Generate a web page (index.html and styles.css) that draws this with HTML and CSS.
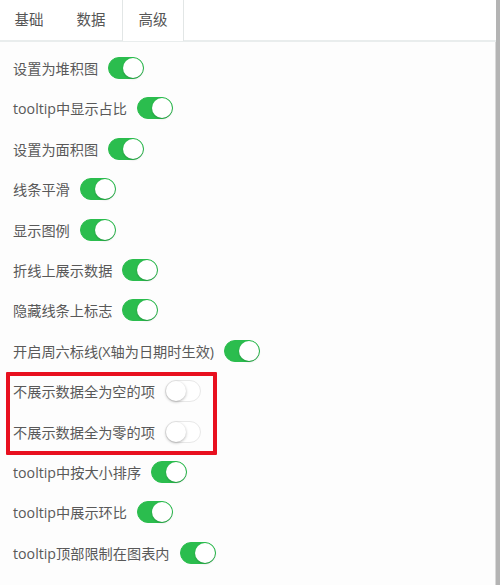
FILE: index.html
```html
<!DOCTYPE html>
<html lang="zh-CN">
<head>
<meta charset="utf-8">
<link rel="stylesheet" href="styles.css">
</head>
<body>
<div class="page">
  <div class="main">
    <div class="tabs">
      <div class="tab">基础</div>
      <div class="tab">数据</div>
      <div class="tab active">高级</div>
    </div>
    <div class="content">
      <div class="row"><span>设置为堆积图</span><span class="sw on"></span></div>
      <div class="row"><span>tooltip中显示占比</span><span class="sw on"></span></div>
      <div class="row"><span>设置为面积图</span><span class="sw on"></span></div>
      <div class="row"><span>线条平滑</span><span class="sw on"></span></div>
      <div class="row"><span>显示图例</span><span class="sw on"></span></div>
      <div class="row"><span>折线上展示数据</span><span class="sw on"></span></div>
      <div class="row"><span>隐藏线条上标志</span><span class="sw on"></span></div>
      <div class="row"><span>开启周六标线(X轴为日期时生效)</span><span class="sw on"></span></div>
      <div class="group">
        <div class="row"><span>不展示数据全为空的项</span><span class="sw"></span></div>
        <div class="row"><span>不展示数据全为零的项</span><span class="sw"></span></div>
      </div>
      <div class="row"><span>tooltip中按大小排序</span><span class="sw on"></span></div>
      <div class="row"><span>tooltip中展示环比</span><span class="sw on"></span></div>
      <div class="row"><span>tooltip顶部限制在图表内</span><span class="sw on"></span></div>
    </div>
  </div>
  <div class="scrollbar"></div>
</div>
</body>
</html>
```
FILE: styles.css
```css
html, body {
  margin: 0;
  padding: 0;
  background: #ffffff;
}
body {
  font-family: "Open Sans", "Noto Sans CJK SC", sans-serif;
  font-size: 14.2px;
  color: #595959;
}
.page {
  display: flex;
  width: 500px;
  height: 585px;
  overflow: hidden;
}
.main {
  flex: 1;
  display: flex;
  flex-direction: column;
  min-width: 0;
}
.tabs {
  display: flex;
  height: 40px;
  border-bottom: 2px solid #e9eded;
  margin-left: -2px;
  flex: none;
}
.tab {
  width: 60px;
  height: 41px;
  line-height: 40px;
  text-align: center;
  border-left: 1px solid transparent;
  border-right: 1px solid transparent;
  color: #555;
  font-size: 14.5px;
}
.tab.active {
  background: #ffffff;
  border-left-color: #e2e6e6;
  border-right-color: #e2e6e6;
  position: relative;
  z-index: 1;
}
.content {
  flex: 1;
  background: #fdfdfd;
  border-right: 1px solid #d9d9d9;
  padding: 15px 0 0 13px;
  display: flex;
  flex-direction: column;
  gap: 18.4px;
}
.group {
  display: flex;
  flex-direction: column;
  gap: 18.4px;
  position: relative;
}
.group::after {
  content: "";
  position: absolute;
  left: -7px;
  top: -8px;
  width: 203px;
  height: 75px;
  border: 4px solid #e8101f;
  border-radius: 1px;
  pointer-events: none;
}
.row {
  display: flex;
  align-items: center;
  height: 22px;
  gap: 10px;
  white-space: nowrap;
}
.sw {
  position: relative;
  width: 36px;
  height: 22px;
  border-radius: 11px;
  box-sizing: border-box;
  background: #ffffff;
  border: 1px solid #e8e8e8;
  flex: none;
}
.sw::after {
  content: "";
  position: absolute;
  top: 0;
  left: 0;
  width: 20px;
  height: 20px;
  border-radius: 50%;
  background: #ffffff;
  box-shadow: 0 1px 3px rgba(0, 0, 0, 0.3);
}
.sw.on {
  background: #2bbd4e;
  border-color: #2bbd4e;
}
.sw.on::after {
  left: 14px;
  box-shadow: 0 1px 2px rgba(0, 0, 0, 0.2);
}
.scrollbar {
  width: 4px;
  flex: none;
  background: #b4b4b4;
}
```
